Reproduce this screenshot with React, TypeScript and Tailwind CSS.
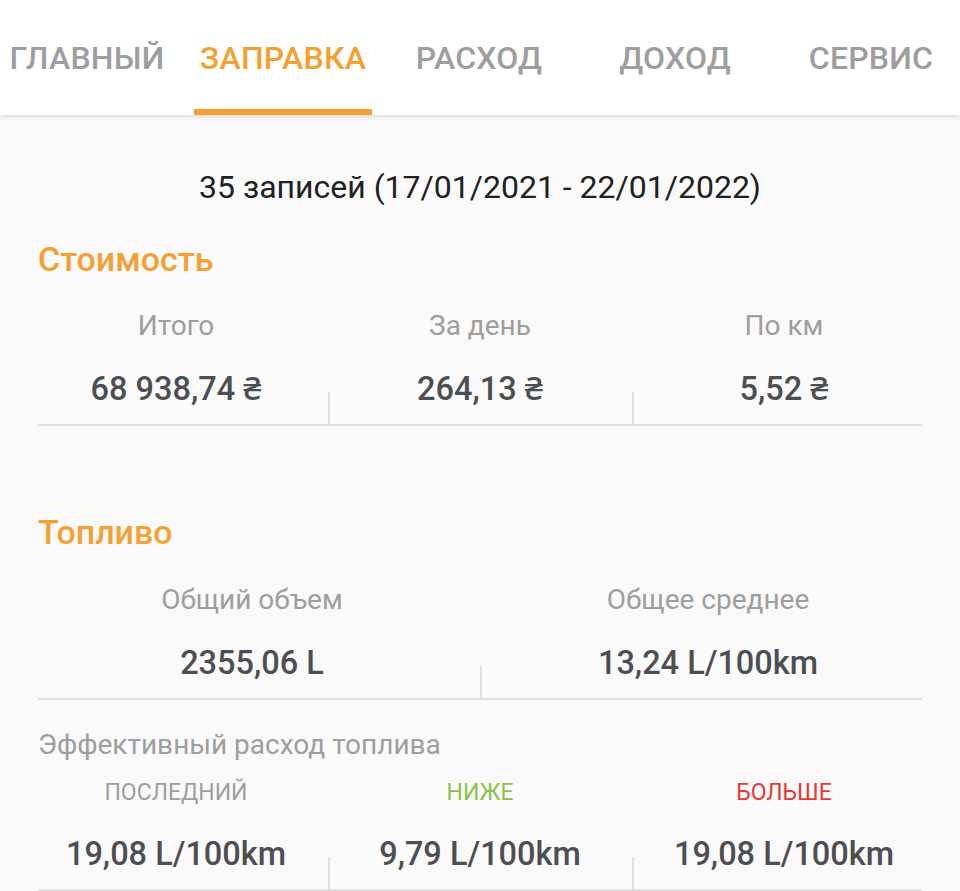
import React from "react";

const Tab = ({ label, active }: { label: string; active?: boolean }) => (
  <div className="w-[196px] shrink-0 h-full flex flex-col items-center">
    <div className="flex-1 flex items-center justify-center pt-[7px]">
      <span
        className={
          "text-[32px] tracking-[0.2px] font-medium leading-[40px] " +
          (active ? "text-[#f4a033]" : "text-[#9e9e9e]")
        }
      >
        {label}
      </span>
    </div>
    <div className={"h-[6px] w-[178px] " + (active ? "bg-[#f4a033]" : "bg-transparent")} />
  </div>
);

const Cell = ({
  label,
  value,
  labelClass,
  divider,
}: {
  label: string;
  value: string;
  labelClass?: string;
  divider?: boolean;
}) => (
  <div className="flex flex-col items-center relative">
    <div className={labelClass ?? "text-[28px] text-[#9e9e9e] leading-[34px]"}>{label}</div>
    <div className="mt-[27px] text-[32.5px] font-medium text-[#4d4e52] leading-[38px]">{value}</div>
    <div className="h-[16px]" />
    {divider && <div className="absolute left-0 bottom-0 h-[32px] w-[2px] bg-[#e0e0e0]" />}
  </div>
);

export default function App() {
  return (
    <div
      className="w-[960px] h-[891px] overflow-hidden bg-[#fafafa] flex flex-col"
      style={{ fontFamily: "Roboto, 'Noto Sans', sans-serif" }}
    >
      <div className="h-[115px] shrink-0 bg-white flex shadow-[0_2px_5px_rgba(0,0,0,0.12)] relative z-10 overflow-hidden">
        <div className="flex h-full ml-[-11px]">
          <Tab label="ГЛАВНЫЙ" />
          <Tab label="ЗАПРАВКА" active />
          <Tab label="РАСХОД" />
          <Tab label="ДОХОД" />
          <Tab label="СЕРВИС" />
        </div>
      </div>

      <div className="shrink-0 text-center text-[32px] text-[#212121] mt-[52px] leading-[40px]">
        35 записей (17/01/2021 - 22/01/2022)
      </div>

      <div className="shrink-0 px-[38px] mt-[32px] text-[34px] font-medium text-[#f4a033] leading-[40px]">
        Стоимость
      </div>

      <div className="shrink-0 px-[24px] mt-[30px]">
        <div className="grid grid-cols-3">
          <Cell label="Итого" value="68 938,74 ₴" />
          <Cell label="За день" value="264,13 ₴" divider />
          <Cell label="По км" value="5,52 ₴" divider />
        </div>
        <div className="mx-[14px] h-[2px] bg-[#e0e0e0]" />
      </div>

      <div className="shrink-0 px-[38px] mt-[86px] text-[34px] font-medium text-[#f4a033] leading-[40px]">
        Топливо
      </div>

      <div className="shrink-0 px-[24px] mt-[31px]">
        <div className="grid grid-cols-2">
          <Cell label="Общий объем" value="2355,06 L" />
          <Cell label="Общее среднее" value="13,24 L/100km" divider />
        </div>
        <div className="mx-[14px] h-[2px] bg-[#e0e0e0]" />
      </div>

      <div className="shrink-0 px-[38px] mt-[28px] text-[28px] text-[#9e9e9e] leading-[34px]">
        Эффективный расход топлива
      </div>

      <div className="shrink-0 px-[24px] mt-[16px]">
        <div className="grid grid-cols-3">
          <Cell
            label="ПОСЛЕДНИЙ"
            value="19,08 L/100km"
            labelClass="text-[23px] text-[#9e9e9e] leading-[30px]"
          />
          <Cell
            label="НИЖЕ"
            value="9,79 L/100km"
            labelClass="text-[23px] text-[#8bc34a] leading-[30px]"
            divider
          />
          <Cell
            label="БОЛЬШЕ"
            value="19,08 L/100km"
            labelClass="text-[23px] text-[#e53935] leading-[30px]"
            divider
          />
        </div>
        <div className="mx-[14px] h-[2px] bg-[#e0e0e0]" />
      </div>
    </div>
  );
}
